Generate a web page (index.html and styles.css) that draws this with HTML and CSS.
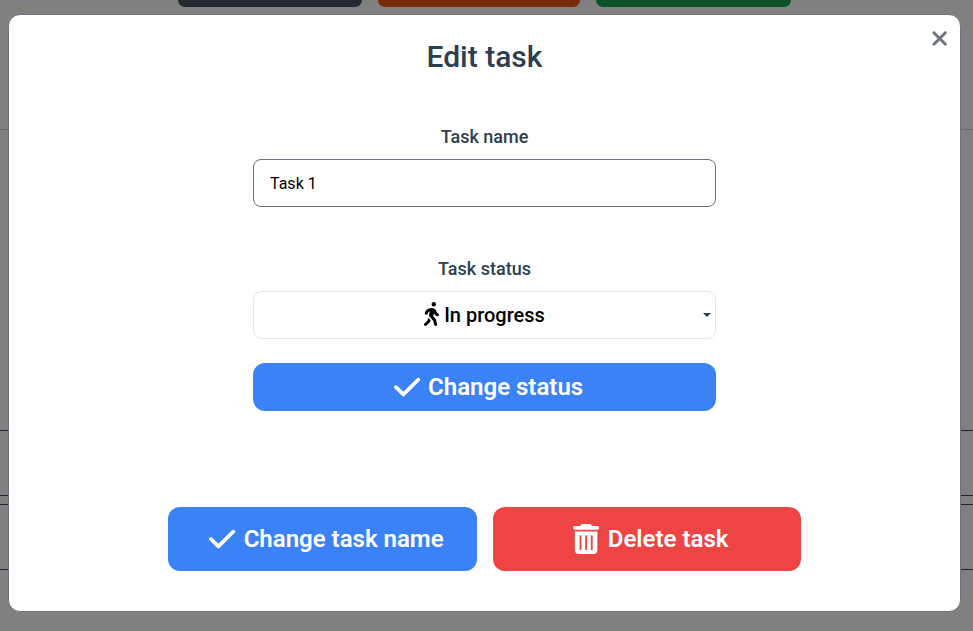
FILE: index.html
```html
<!DOCTYPE html>
<html lang="en">
<head>
<meta charset="utf-8">
<title>Edit task</title>
<link rel="stylesheet" href="styles.css">
</head>
<body>
<div class="board">
  <div class="filters">
    <div class="filter filter-all"></div>
    <div class="filter filter-progress"></div>
    <div class="filter filter-done"></div>
  </div>
  <div class="divider"></div>
  <div class="row"></div>
  <div class="row"></div>
</div>
<div class="overlay">
  <div class="modal">
    <button class="close" aria-label="Close"><svg viewBox="0 0 384 512" width="17.25" height="23"><path d="M342.6 150.6c12.5-12.5 12.5-32.8 0-45.3s-32.8-12.5-45.3 0L192 210.7 86.6 105.4c-12.5-12.5-32.8-12.5-45.3 0s-12.5 32.8 0 45.3L146.7 256 41.4 361.4c-12.5 12.5-12.5 32.8 0 45.3s32.8 12.5 45.3 0L192 301.3 297.4 406.6c12.5 12.5 32.8 12.5 45.3 0s12.5-32.8 0-45.3L237.3 256 342.6 150.6z"/></svg></button>
    <h1>Edit task</h1>
    <label class="label" for="name">Task name</label>
    <input class="field" id="name" type="text" value="Task 1">
    <div class="label label-status">Task status</div>
    <div class="select">
      <svg class="walker" viewBox="0 0 320 512" width="15" height="24"><path d="M160 48a48 48 0 1 1 96 0 48 48 0 1 1 -96 0zM126.5 199.3c-1 .4-1.9 .8-2.9 1.2l-8 3.5c-16.4 7.3-29 21.2-34.7 38.2l-2.6 7.8c-5.6 16.8-23.7 25.8-40.5 20.2s-25.8-23.7-20.2-40.5l2.6-7.8c11.4-34.1 36.6-61.9 69.4-76.5l8-3.5c20.8-9.2 43.3-14 66.1-14c44.6 0 84.8 26.8 101.9 67.9L281 232.7l21.4 10.7c15.8 7.9 22.2 27.1 14.3 42.9s-27.1 22.2-42.9 14.3L247 287.3c-10.3-5.2-18.4-13.8-22.8-24.5l-9.6-23-19.3 65.5 49.5 54c5.4 5.9 9.2 13 11.2 20.8l23 92.1c4.3 17.1-6.1 34.5-23.3 38.8s-34.5-6.1-38.8-23.3l-22-88.1-70.7-77.1c-14.8-16.1-20.3-38.6-14.7-59.7l16.9-63.5zM68.7 398l25-62.4c2.1 3 4.5 5.8 7 8.6l40.7 44.4-14.5 36.2c-2.4 6-6 11.5-10.6 16.1L54.6 502.6c-12.5 12.5-32.8 12.5-45.3 0s-12.5-32.8 0-45.3L68.7 398z"/></svg>
      <span>In progress</span>
      <svg class="caret" viewBox="0 0 8 4" width="8" height="4"><path d="M0 0h8L4 4z"/></svg>
    </div>
    <button class="btn btn-status"><svg viewBox="0 0 448 512" width="26.25" height="30"><path d="M438.6 105.4c12.5 12.5 12.5 32.8 0 45.3l-256 256c-12.5 12.5-32.8 12.5-45.3 0l-128-128c-12.5-12.5-12.5-32.8 0-45.3s32.8-12.5 45.3 0L160 338.7 393.4 105.4c12.5-12.5 32.8-12.5 45.3 0z"/></svg><span>Change status</span></button>
    <div class="actions">
      <button class="btn btn-name"><svg viewBox="0 0 448 512" width="26.25" height="30"><path d="M438.6 105.4c12.5 12.5 12.5 32.8 0 45.3l-256 256c-12.5 12.5-32.8 12.5-45.3 0l-128-128c-12.5-12.5-12.5-32.8 0-45.3s32.8-12.5 45.3 0L160 338.7 393.4 105.4c12.5-12.5 32.8-12.5 45.3 0z"/></svg><span>Change task name</span></button>
      <button class="btn btn-delete"><svg viewBox="0 0 448 512" width="26.25" height="30"><path d="M135.2 17.7C140.6 6.8 151.7 0 163.8 0H284.2c12.1 0 23.2 6.8 28.6 17.7L320 32h96c17.7 0 32 14.3 32 32s-14.3 32-32 32H32C14.3 96 0 81.7 0 64S14.3 32 32 32h96l7.2-14.3zM32 128H416V448c0 35.3-28.7 64-64 64H96c-35.3 0-64-28.7-64-64V128zm96 64c-8.8 0-16 7.2-16 16V432c0 8.8 7.2 16 16 16s16-7.2 16-16V208c0-8.8-7.2-16-16-16zm96 0c-8.8 0-16 7.2-16 16V432c0 8.8 7.2 16 16 16s16-7.2 16-16V208c0-8.8-7.2-16-16-16zm96 0c-8.8 0-16 7.2-16 16V432c0 8.8 7.2 16 16 16s16-7.2 16-16V208c0-8.8-7.2-16-16-16z"/></svg><span>Delete task</span></button>
    </div>
  </div>
</div>
</body>
</html>
```

FILE: styles.css
```css
* {
  box-sizing: border-box;
}

body {
  margin: 0;
  height: 631px;
  overflow: hidden;
  background: #808080;
  color: #2c3e50;
  font-family: Roboto, "Liberation Sans", sans-serif;
}

button,
input {
  font-family: inherit;
}

svg {
  display: block;
  flex: none;
  fill: currentColor;
}

.filters {
  display: flex;
  gap: 16px;
  padding-left: 178px;
}

.filter {
  height: 7px;
  border-radius: 0 0 8px 8px;
}

.filter-all {
  width: 184px;
  background: #252a32;
}

.filter-progress {
  width: 202px;
  background: #792a08;
}

.filter-done {
  width: 195px;
  background: #0b5226;
}

.divider {
  height: 1px;
  margin: 122px 0 300px;
  background: #6c6c6c;
}

.row {
  height: 66px;
  margin-bottom: 8px;
  border: solid #22232b;
  border-width: 1px 0;
}

.overlay {
  position: fixed;
  inset: 0;
  padding: 14px 12px 19px 8px;
}

.modal {
  position: relative;
  display: flex;
  flex-direction: column;
  align-items: center;
  height: 598px;
  padding-top: 22px;
  border: 1px solid #6b7280;
  border-radius: 12px;
  background: #fff;
}

.close {
  position: absolute;
  top: 12px;
  right: 11.75px;
  padding: 0;
  border: 0;
  background: none;
  color: #6b7280;
}

h1 {
  margin: 0 0 46px;
  font-size: 30px;
  font-weight: 500;
  line-height: 40px;
}

.label {
  margin-bottom: 8px;
  font-size: 18px;
  font-weight: 500;
  line-height: 28px;
}

.label-status {
  margin-top: 48px;
}

.field {
  width: 463px;
  height: 48px;
  padding: 0 16px;
  border: 1px solid #6b7280;
  border-radius: 8px;
  background: #fff;
  color: #000;
  font-size: 16px;
}

.select {
  position: relative;
  display: flex;
  align-items: center;
  justify-content: center;
  gap: 5px;
  width: 463px;
  height: 48px;
  border: 1px solid #e5e7eb;
  border-radius: 8px;
  color: #000;
  font-size: 20px;
  font-weight: 500;
}

.walker {
  margin-bottom: 2px;
}

.caret {
  position: absolute;
  top: 21px;
  right: 4px;
  color: #2c3e50;
}

.btn {
  display: flex;
  align-items: center;
  justify-content: center;
  gap: 8px;
  padding: 0 0 0 8px;
  border: 0;
  border-radius: 12px;
  background: #3b82f6;
  color: #fff;
  font-size: 24px;
  font-weight: 600;
}

.btn-status {
  width: 463px;
  height: 48px;
  margin-top: 24px;
}

.actions {
  display: flex;
  gap: 16px;
  margin-top: 96px;
}

.btn-name {
  width: 309px;
  height: 64px;
}

.btn-delete {
  gap: 8.5px;
  width: 308px;
  height: 64px;
  padding-left: 7.5px;
  background: #ef4444;
}
```
